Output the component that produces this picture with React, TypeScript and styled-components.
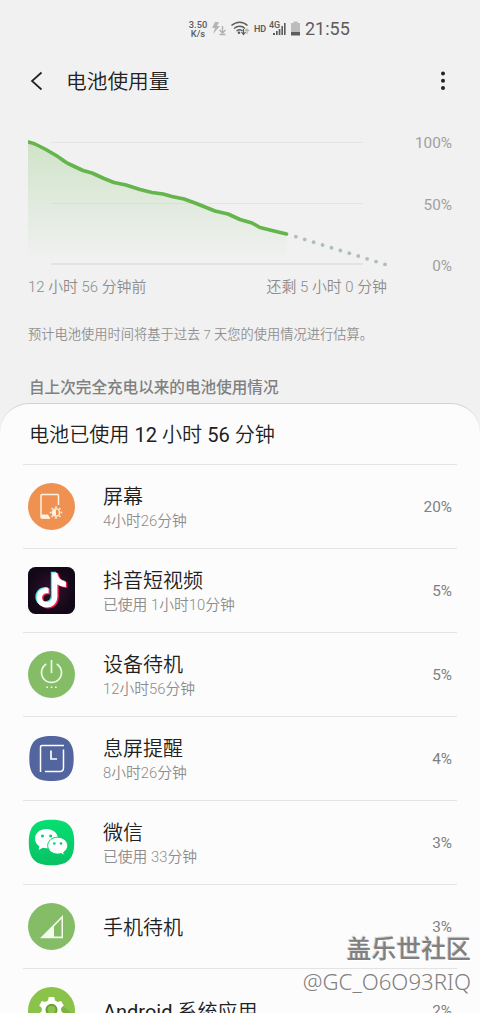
import React from "react";
import styled, { createGlobalStyle } from "styled-components";

const GlobalStyle = createGlobalStyle`
  * { box-sizing: border-box; }
  body { margin: 0; background: #f1f1f1; font-family: Roboto, "Noto Sans CJK SC", sans-serif; }
  svg { display: block; }
`;

const Screen = styled.div`
  position: relative;
  display: flex;
  flex-direction: column;
  width: 480px;
  height: 1013px;
  overflow: hidden;
  background: #f1f1f1;
  white-space: nowrap;
`;

const StatusBar = styled.div`
  display: flex;
  flex: none;
  align-items: center;
  height: 58px;
  padding-left: 187px;
  color: #5c5c5c;
`;

const NetSpeed = styled.div`
  width: 22px;
  font-size: 9.3px;
  font-weight: 500;
  line-height: 9px;
  text-align: center;
`;

const Clock = styled.div`
  margin-left: 4px;
  font-size: 18px;
  font-weight: 370;
  line-height: 22px;
`;

const AppBar = styled.header`
  display: flex;
  flex: none;
  align-items: center;
  height: 46px;
  padding: 0 35px 0 29px;
`;

const PageTitle = styled.h1`
  flex: 1;
  margin: 2px 0 0 21px;
  color: #222;
  font-size: 20.7px;
  font-weight: 350;
  line-height: 30px;
`;

const ChartSection = styled.section`
  display: flex;
  flex: none;
  justify-content: space-between;
  height: 171px;
  padding: 28px 28px 0;
`;

const ChartBody = styled.div`
  width: 360px;
`;

const AxisLabels = styled.div`
  display: flex;
  justify-content: space-between;
  width: 359px;
  padding-top: 1px;
  color: #8c8c8c;
  font-size: 14.9px;
  font-weight: 350;
  line-height: 22px;
`;

const Scale = styled.div`
  display: flex;
  flex-direction: column;
  justify-content: space-between;
  height: 144px;
  padding-top: 1px;
  color: #a0a0a0;
  font-size: 15.3px;
  font-weight: 370;
  line-height: 20px;
  text-align: right;
`;

const Note = styled.p`
  flex: none;
  margin: 50px 0 0 28px;
  color: #909090;
  font-size: 13.25px;
  font-weight: 350;
  line-height: 20px;
`;

const SectionTitle = styled.h2`
  flex: none;
  margin: 31px 0 0 29px;
  color: #808080;
  font-size: 15.6px;
  font-weight: 500;
  line-height: 24px;
`;

const Card = styled.main`
  flex: none;
  margin-top: 3px;
  padding: 0 23px;
  height: 640px;
  border-top: 1px solid #d2d2d2;
  border-radius: 29px 29px 0 0;
  background: #fcfcfc;
`;

const CardTitle = styled.h3`
  height: 60px;
  margin: 0;
  padding-left: 6px;
  color: #202020;
  font-size: 20.1px;
  font-weight: 350;
  line-height: 63px;
`;

const Latin = styled.span`
  font-weight: 400;
`;

const Row = styled.div`
  display: flex;
  align-items: center;
  height: 84px;
  padding: 0 5px;
  border-top: 1px solid #e3e3e3;
`;

const IconBox = styled.div`
  width: 47px;
  height: 47px;
`;

const RowText = styled.div`
  flex: 1;
  margin-left: 28px;
  padding-top: 2px;
`;

const RowTitle = styled.div`
  color: #202020;
  font-size: 20px;
  font-weight: 350;
  line-height: 26px;
`;

const RowSub = styled.div`
  color: #8c8c8c;
  font-size: 14.8px;
  font-weight: 350;
  line-height: 22px;
`;

const Percent = styled.div`
  color: #808080;
  font-size: 15.3px;
  font-weight: 370;
`;

const Watermark = styled.div`
  position: absolute;
  right: 9px;
  top: 933px;
  color: #808080;
  text-align: right;
`;

const WatermarkName = styled.div`
  font-size: 24.9px;
  font-weight: 500;
  line-height: 34px;
  text-shadow: -1px -1px 0 #d8d8d8, 1px 1px 0 #fff;
`;

const WatermarkUser = styled.div`
  font-family: "Noto Sans", sans-serif;
  font-size: 22.2px;
  font-weight: 300;
  line-height: 29px;
  text-shadow: 1px 1px 0 #fff;
`;

const StatusIcons = () => (
  <svg width="92" height="20" viewBox="209 19 92 20" fill="none">
    <path d="M215 22h4l-2 4h3l-7 8 2-6h-3z" fill="#b5b5b5" />
    <path d="M222.500 26v7m-3-3 3 3 3-3M219.500 34.500h6" stroke="#b0b0b0" strokeWidth="1.400" />
    <g stroke="#5c5c5c" strokeWidth="1.500">
      <path d="M231.500 25.500c5-4.500 11.500-4.500 16 0M234 28.500c3.500-3 8-3 11 0M236.500 31c2-1.500 4.500-1.500 6 0" />
    </g>
    <circle cx="239" cy="32.800" r="1.300" fill="#5c5c5c" />
    <path d="M243.500 29v5m-2-2 2 2.500 2-2.500" stroke="#5c5c5c" strokeWidth="1.200" />
    <path d="M247 34v-5m-2 2 2-2 2 2" stroke="#b5b5b5" strokeWidth="1.200" />
    <text x="254" y="31.500" fill="#5c5c5c" fontFamily="Roboto" fontWeight="600" fontSize="9">HD</text>
    <text x="269" y="28" fill="#5c5c5c" fontFamily="Roboto" fontWeight="500" fontSize="9">4G</text>
    <g fill="#5c5c5c">
      <path d="M273 33h2v2h-2zM276 31h1.700v4h-1.700zM278.700 29h1.700v6h-1.700zM281.400 26h1.600v9h-1.600zM284 23h1.600v12h-1.600z" />
    </g>
    <path d="M293.500 21.500h4v1.500h2.500v9h-9v-9h2.500z" fill="#bcbcbc" />
    <path d="M291 32h9v3.500h-9z" fill="#5c5c5c" />
  </svg>
);

const LEVEL_LINE =
  "M28 142C30 142.500 32.500 143 35 144L45 149L57 156C61 158.500 64 161.500 68 163.500L83 170.500L92 173L104 178.500L114 182.500L126 185L140 189.500L152 192.500L163 194L172 196.500L184 199L195 203L205 207L215 211L228 214L240 219.500L252 223L260 227.500L272 230.500L286.500 234";

const forecast = Array.from({ length: 11 }, (_, i) => ({ x: 295.8 + i * 8.92, y: 236.7 + i * 2.76 }));

const LevelChart = () => (
  <svg width="360" height="143" viewBox="28 132 360 143" fill="none">
    <defs>
      <linearGradient id="level" x1="0" y1="142" x2="0" y2="262" gradientUnits="userSpaceOnUse">
        <stop offset="0" stopColor="#66b84a" stopOpacity="0.240" />
        <stop offset="1" stopColor="#66b84a" stopOpacity="0" />
      </linearGradient>
    </defs>
    <path d="M51 142.500H363M51 203.500H363" stroke="#e5e5e5" />
    <path d="M51 264H363" stroke="#e3e3e3" strokeWidth="2" />
    <path d={`${LEVEL_LINE}V262H28Z`} fill="url(#level)" />
    <path d={LEVEL_LINE} stroke="#64b54b" strokeWidth="3.600" strokeLinejoin="round" strokeLinecap="round" />
    {forecast.map((p) => (
      <circle key={p.x} cx={p.x} cy={p.y} r="1.900" fill="#afbdc1" />
    ))}
  </svg>
);

const ScreenIcon = () => (
  <svg viewBox="0 0 47 47" fill="none">
    <circle cx="23.500" cy="23.500" r="23.500" fill="#ef9251" />
    <path d="M30.500 22V12.500a1 1 0 0 0-1-1h-15.500a1 1 0 0 0-1 1v21.500a1 1 0 0 0 1 1h8" stroke="#fff1e4" strokeWidth="1.500" />
    <path d="M13 31.500h7l2 4h-8a1 1 0 0 1-1-1z" fill="#fff1e4" />
    <circle cx="28" cy="29.500" r="3.600" stroke="#fff1e4" strokeWidth="1.400" />
    <path d="M28 26a3.500 3.500 0 0 0 0 7z" fill="#fff1e4" />
    <path d="M28 23.300v1.700M28 34v1.700M21.800 29.500h1.700M32.500 29.500h1.700M23.600 25.100l1.200 1.200M31.200 32.700l1.200 1.200M23.600 33.900l1.200-1.200M31.200 26.300l1.200-1.200" stroke="#fff1e4" strokeWidth="1.600" />
  </svg>
);

const NOTE =
  "M23.500 5.200h5.200c.5 4.700 3.800 8.200 8.600 8.800v5.500c-3.200 0-6-1-8.500-2.700v12c0 7-4.700 11.200-10.700 11.200-5.700 0-10-4.300-10-9.700 0-6.500 5.400-10.700 11.900-9.900v5.600c-3.700-.9-6.500 1-6.500 4.200 0 2.600 2 4.400 4.600 4.400 3.200 0 5.400-2.100 5.400-5.900z";

const DouyinIcon = () => (
  <svg viewBox="0 0 47 47">
    <defs>
      <radialGradient id="night">
        <stop offset="0" stopColor="#35102c" />
        <stop offset="1" stopColor="#120817" />
      </radialGradient>
    </defs>
    <rect width="47" height="47" rx="7.500" fill="url(#night)" />
    <path d={NOTE} fill="#4de8e6" transform="translate(-.7 -.4)" />
    <path d={NOTE} fill="#f4224f" transform="translate(2 1.400)" />
    <path d={NOTE} fill="#fff" transform="translate(.6 .5)" />
  </svg>
);

const StandbyIcon = () => (
  <svg viewBox="0 0 47 47" fill="none">
    <circle cx="23.500" cy="23.500" r="23.500" fill="#84bd66" />
    <path d="M18.300 12.900a10 10 0 1 0 10.400 0M23.500 9v13" stroke="#eef9e6" strokeWidth="1.700" />
    <path d="M18.300 35.500h1.700v1.600h-1.700zM22.700 35.500h1.700v1.600h-1.700zM27 35.500h1.700v1.600h-1.700z" fill="#eef9e6" />
  </svg>
);

const AlwaysOnIcon = () => (
  <svg viewBox="0 0 47 47" fill="none">
    <path d="M23.500 1C39.500 1 45.700 7 45.700 23.500S39.500 46 23.500 46 1.300 40 1.300 23.500 7.500 1 23.500 1z" fill="#53659f" />
    <path d="M12.500 37V12a1.500 1.500 0 0 1 1.500-1.500H36M35.500 14.500v18c0 2.500-1 4-3.500 4H17" stroke="#fff" strokeWidth="1.500" />
    <path d="M23 15.500v8.500h6" stroke="#fff" strokeWidth="1.700" />
  </svg>
);

const WeChatIcon = () => (
  <svg viewBox="0 0 47 47">
    <defs>
      <linearGradient id="mint" x1="0" y1="0" x2="0" y2="1">
        <stop offset="0" stopColor="#06df72" />
        <stop offset="1" stopColor="#08c164" />
      </linearGradient>
    </defs>
    <path d="M23.500.7C40 .7 46.200 7 46.200 23.500S40 46.300 23.500 46.300.8 40 .8 23.500 7 .7 23.500.7z" fill="url(#mint)" />
    <path d="M18.500 10C12 10 7 14.200 7 19.700c0 3 1.600 5.700 4.300 7.500L10.700 31l4.100-2.200c1.200.3 2.400.5 3.700.5 6.500 0 11.500-4.200 11.500-9.600S25 10 18.500 10z" fill="#fff" />
    <path d="M29.700 18.200c-5.600 0-10 3.700-10 8.400s4.400 8.500 10 8.500c1.200 0 2.300-.2 3.400-.5l3.200 1.700-.6-3c2.500-1.500 4-4 4-6.700 0-4.700-4.400-8.400-10-8.400z" fill="#fff" stroke="#06d06a" strokeWidth="1" />
    <g fill="#08cc6a">
      <circle cx="14.500" cy="17" r="1.500" /><circle cx="22.700" cy="17" r="1.500" />
      <circle cx="26.300" cy="24.500" r="1.300" /><circle cx="33" cy="24.500" r="1.300" />
    </g>
  </svg>
);

const SignalIcon = () => (
  <svg viewBox="0 0 47 47">
    <circle cx="23.500" cy="23.500" r="23.500" fill="#84bd66" />
    <path d="M35 12v23.200H12zM33.500 15.800 26 23.400v10.200h7.500z" fill="#f3fcec" fillRule="evenodd" />
  </svg>
);

const AndroidIcon = () => (
  <svg viewBox="0 0 47 47" fill="none">
    <circle cx="23.500" cy="23.500" r="23.500" fill="#8bc34a" />
    <path d="M35 19 46 28a23.500 23.500 0 0 1-18 18L15 34z" fill="#7cb342" />
    <path d="M20.800 10h5.400l.8 3.400 2.700 1.600 3.400-1 2.700 4.600-2.600 2.400v3.200l2.600 2.400-2.700 4.600-3.400-1-2.700 1.600-.8 3.400h-5.400l-.8-3.400-2.700-1.600-3.400 1-2.700-4.600 2.600-2.400V21l-2.600-2.400 2.700-4.600 3.400 1 2.700-1.600z" fill="#fff" />
    <circle cx="23.500" cy="22.800" r="5" fill="#8bc34a" stroke="#689f38" strokeWidth="2" />
  </svg>
);

interface Usage {
  id: string;
  title: React.ReactNode;
  detail?: string;
  percent: number;
  Icon: React.FC;
}

const usages: Usage[] = [
  { id: "screen", title: "屏幕", detail: "4小时26分钟", percent: 20, Icon: ScreenIcon },
  { id: "douyin", title: "抖音短视频", detail: "已使用 1小时10分钟", percent: 5, Icon: DouyinIcon },
  { id: "standby", title: "设备待机", detail: "12小时56分钟", percent: 5, Icon: StandbyIcon },
  { id: "aod", title: "息屏提醒", detail: "8小时26分钟", percent: 4, Icon: AlwaysOnIcon },
  { id: "wechat", title: "微信", detail: "已使用 33分钟", percent: 3, Icon: WeChatIcon },
  { id: "cell", title: "手机待机", percent: 3, Icon: SignalIcon },
  { id: "android", title: <><Latin>Android </Latin>系统应用</>, percent: 2, Icon: AndroidIcon },
];

export default function App() {
  return (
    <Screen>
      <GlobalStyle />
      <StatusBar>
        <NetSpeed>3.50<br />K/s</NetSpeed>
        <StatusIcons />
        <Clock>21:55</Clock>
      </StatusBar>
      <AppBar>
        <svg width="16" height="20" viewBox="0 0 16 20" fill="none">
          <path d="M12.500 1.500 3 10l9.500 8.500" stroke="#222" strokeWidth="1.700" />
        </svg>
        <PageTitle>电池使用量</PageTitle>
        <svg width="4" height="20" viewBox="0 0 4 20" fill="#222">
          <circle cx="2" cy="2.500" r="2" /><circle cx="2" cy="9.800" r="2" /><circle cx="2" cy="17.100" r="2" />
        </svg>
      </AppBar>
      <ChartSection>
        <ChartBody>
          <LevelChart />
          <AxisLabels>
            <span>12 小时 56 分钟前</span>
            <span>还剩 5 小时 0 分钟</span>
          </AxisLabels>
        </ChartBody>
        <Scale>
          <span>100%</span>
          <span>50%</span>
          <span>0%</span>
        </Scale>
      </ChartSection>
      <Note>预计电池使用时间将基于过去 7 天您的使用情况进行估算。</Note>
      <SectionTitle>自上次完全充电以来的电池使用情况</SectionTitle>
      <Card>
        <CardTitle>
          电池已使用<Latin> 12 </Latin>小时<Latin> 56 </Latin>分钟
        </CardTitle>
        {usages.map(({ id, title, detail, percent, Icon }) => (
          <Row key={id}>
            <IconBox><Icon /></IconBox>
            <RowText>
              <RowTitle>{title}</RowTitle>
              {detail && <RowSub>{detail}</RowSub>}
            </RowText>
            <Percent>{percent}%</Percent>
          </Row>
        ))}
      </Card>
      <Watermark>
        <WatermarkName>盖乐世社区</WatermarkName>
        <WatermarkUser>@GC_O6O93RIQ</WatermarkUser>
      </Watermark>
    </Screen>
  );
}
